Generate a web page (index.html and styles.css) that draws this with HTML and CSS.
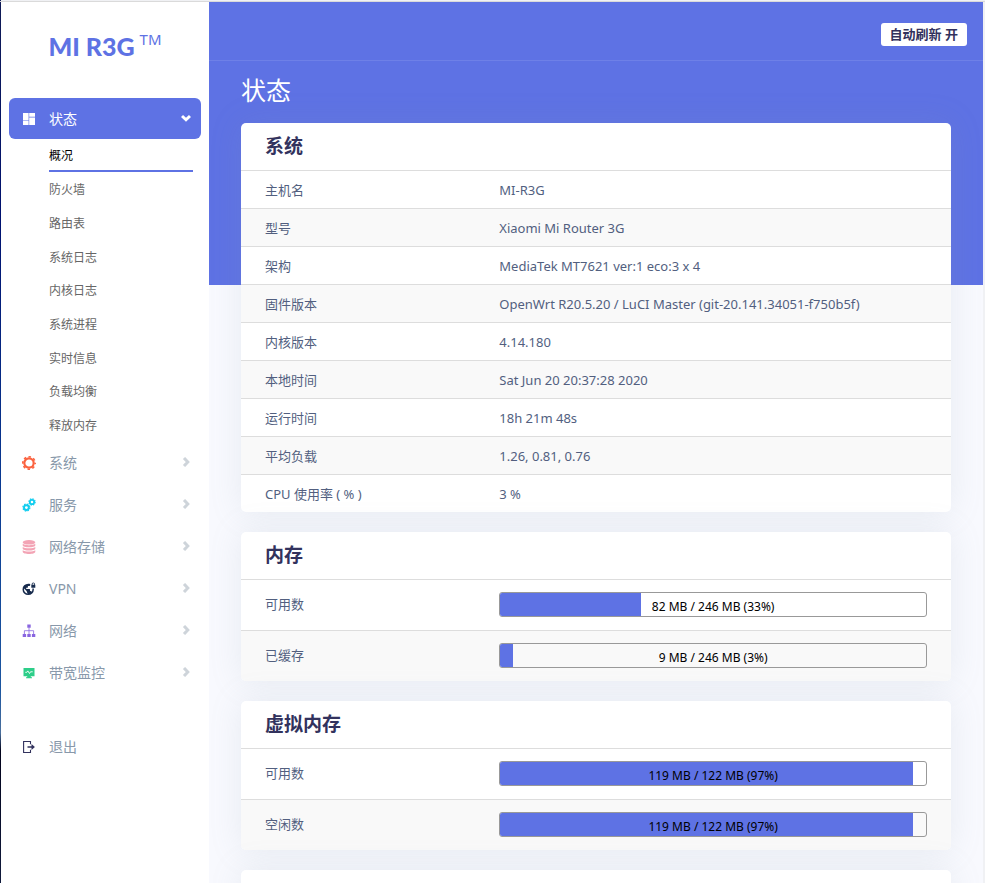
FILE: index.html
```html
<!DOCTYPE html>
<html lang="zh-CN">
<head>
<meta charset="utf-8">
<title>MI-R3G - 概况 - LuCI</title>
<meta name="viewport" content="width=device-width, initial-scale=1">
<link rel="stylesheet" href="styles.css">
</head>
<body>
<div class="app">
  <aside class="sidebar">
    <a class="brand" href="#">MI R3G<span class="brand-mark">TM</span></a>
    <nav class="menu">
      <a class="menu-item active" href="#">
        <svg class="icon" viewBox="0 0 14 14" fill="currentColor"><path d="M1 1h5.600v7H1zM7.200 1H13v3.800H7.200zM7.200 5.400H13V13H7.200zM1 8.600h5.600V13H1z"/></svg>
        <span>状态</span>
        <svg class="chevron" viewBox="0 0 10 10"><path d="M1 3l4 3.800L9 3"/></svg>
      </a>
      <ul class="submenu">
        <li><a class="current" href="#">概况</a></li>
        <li><a href="#">防火墙</a></li>
        <li><a href="#">路由表</a></li>
        <li><a href="#">系统日志</a></li>
        <li><a href="#">内核日志</a></li>
        <li><a href="#">系统进程</a></li>
        <li><a href="#">实时信息</a></li>
        <li><a href="#">负载均衡</a></li>
        <li><a href="#">释放内存</a></li>
      </ul>
      <a class="menu-item" href="#">
        <svg class="icon orange" viewBox="0 0 14 14"><circle cx="7" cy="7" r="4.700" fill="none" stroke="currentColor" stroke-width="2.200"/><circle cx="7" cy="7" r="6.200" fill="none" stroke="currentColor" stroke-width="1.600" stroke-dasharray="2.500 2.369" stroke-dashoffset="1.250"/></svg>
        <span>系统</span>
        <svg class="chevron" viewBox="0 0 10 10"><path d="M3 1l3.800 4L3 9"/></svg>
      </a>
      <a class="menu-item" href="#">
        <svg class="icon cyan" viewBox="0 0 14 14" fill="none" stroke="currentColor"><circle cx="4.400" cy="9.600" r="2.400" stroke-width="1.900"/><circle cx="4.400" cy="9.600" r="3.500" stroke-width="1.200" stroke-dasharray="1.500 1.249"/><circle cx="10" cy="4" r="2.200" stroke-width="1.800"/><circle cx="10" cy="4" r="3.200" stroke-width="1.100" stroke-dasharray="1.400 1.113"/></svg>
        <span>服务</span>
        <svg class="chevron" viewBox="0 0 10 10"><path d="M3 1l3.800 4L3 9"/></svg>
      </a>
      <a class="menu-item" href="#">
        <svg class="icon pink" viewBox="0 0 14 14" fill="currentColor"><ellipse cx="7" cy="2.300" rx="6.300" ry="2.300"/><path d="M.7 3.800c1.600 1.800 11 1.800 12.600 0v1.400c0 2.800-12.600 2.800-12.600 0zM.7 7c1.600 1.800 11 1.800 12.600 0v1.400c0 2.800-12.600 2.800-12.600 0zM.7 10.200c1.600 1.800 11 1.800 12.600 0v1.500c0 3-12.600 3-12.600 0z"/></svg>
        <span>网络存储</span>
        <svg class="chevron" viewBox="0 0 10 10"><path d="M3 1l3.800 4L3 9"/></svg>
      </a>
      <a class="menu-item" href="#">
        <svg class="icon navy" viewBox="0 0 14 14" fill="currentColor"><path fill-rule="evenodd" d="M6.200 1.700A5.700 5.700 0 1 0 11.900 7.400c0-.4 0-.7-.1-1H10.300c.1.400.1.700.1 1 0 .9-.3 1.700-.8 2.400-.2-.5-.6-.8-1.100-.8H8V7.500c0-.4-.2-.6-.5-.6H4.200V5.700h1.200c.3 0 .5-.2.500-.5V4.100h1.100c.7 0 1.200-.5 1.200-1.100V2.100c-.6-.3-1.300-.4-2-.4zM5.600 11.600A4.200 4.200 0 0 1 2.100 6.500l2.700 2.700v.6c0 .6.300 1 .8 1.100z"/><path fill-rule="evenodd" d="M9.300 2.700h.4V2a1.600 1.600 0 0 1 3.200 0v.7h.4v3H9.300zm1.200 0h1.600V2a.8.8 0 0 0-1.600 0z"/></svg>
        <span>VPN</span>
        <svg class="chevron" viewBox="0 0 10 10"><path d="M3 1l3.800 4L3 9"/></svg>
      </a>
      <a class="menu-item" href="#">
        <svg class="icon purple" viewBox="0 0 14 14" fill="currentColor"><path d="M5.300.5h3.400v3.200H5.300zM.7 10h3.400v3H.7zM5.300 10h3.400v3H5.300zM9.900 10h3.400v3H9.900z"/><path d="M7 3.500v6.500M2.400 10V6.700h9.200V10" fill="none" stroke="currentColor" stroke-width=".8"/></svg>
        <span>网络</span>
        <svg class="chevron" viewBox="0 0 10 10"><path d="M3 1l3.800 4L3 9"/></svg>
      </a>
      <a class="menu-item" href="#">
        <svg class="icon green" viewBox="0 0 14 14"><path fill="currentColor" d="M1.500 2h11v8.300H8.800v1H10v.9H4v-.9h1.200v-1H1.500z"/><path d="M3.300 6.300h1.500l1-1.400 1.700 2.600 1-1.700h2.200" fill="none" stroke="#fff" stroke-width=".9"/></svg>
        <span>带宽监控</span>
        <svg class="chevron" viewBox="0 0 10 10"><path d="M3 1l3.800 4L3 9"/></svg>
      </a>
      <a class="menu-item logout" href="#">
        <svg class="icon indigo" viewBox="0 0 14 14"><path d="M8.500 4.200V1.500H1.600v11h6.900V9.800" fill="none" stroke="currentColor" stroke-width="1.100"/><path d="M5.500 6.200h4V4l3.400 3-3.400 3V7.800h-4z" fill="currentColor"/></svg>
        <span>退出</span>
      </a>
    </nav>
  </aside>
  <main class="main">
    <header class="topbar">
      <button class="refresh" type="button">自动刷新 开</button>
    </header>
    <div class="content">
      <h1>状态</h1>
      <section class="card">
        <h2>系统</h2>
        <table>
          <tr><th scope="row">主机名</th><td>MI-R3G</td></tr>
          <tr><th scope="row">型号</th><td>Xiaomi Mi Router 3G</td></tr>
          <tr><th scope="row">架构</th><td>MediaTek MT7621 ver:1 eco:3 x 4</td></tr>
          <tr><th scope="row">固件版本</th><td>OpenWrt R20.5.20 / LuCI Master (git-20.141.34051-f750b5f)</td></tr>
          <tr><th scope="row">内核版本</th><td>4.14.180</td></tr>
          <tr><th scope="row">本地时间</th><td>Sat Jun 20 20:37:28 2020</td></tr>
          <tr><th scope="row">运行时间</th><td>18h 21m 48s</td></tr>
          <tr><th scope="row">平均负载</th><td>1.26, 0.81, 0.76</td></tr>
          <tr><th scope="row">CPU 使用率 ( % )</th><td>3 %</td></tr>
        </table>
      </section>
      <section class="card">
        <h2>内存</h2>
        <table class="meters">
          <tr><th scope="row">可用数</th><td><div class="bar"><div class="fill" style="width:33%"></div><span>82 MB / 246 MB (33%)</span></div></td></tr>
          <tr><th scope="row">已缓存</th><td><div class="bar"><div class="fill" style="width:3%"></div><span>9 MB / 246 MB (3%)</span></div></td></tr>
        </table>
      </section>
      <section class="card">
        <h2>虚拟内存</h2>
        <table class="meters">
          <tr><th scope="row">可用数</th><td><div class="bar"><div class="fill" style="width:97%"></div><span>119 MB / 122 MB (97%)</span></div></td></tr>
          <tr><th scope="row">空闲数</th><td><div class="bar"><div class="fill" style="width:97%"></div><span>119 MB / 122 MB (97%)</span></div></td></tr>
        </table>
      </section>
      <section class="card"><h2></h2></section>
    </div>
  </main>
</div>
</body>
</html>
```

FILE: styles.css
```css
:root {
  --primary: #5e72e4;
  --line: #ddd;
}

* {
  box-sizing: border-box;
}

body {
  margin: 0;
  font-family: "Noto Sans", "Noto Sans CJK SC", sans-serif;
  font-size: 13px;
  color: #525f7f;
  background: #f8f9fe;
}

a {
  color: inherit;
  text-decoration: none;
}

.app {
  display: flex;
  height: 100vh;
  overflow: hidden;
  padding: 2px 2px 0 1px;
  background:
    linear-gradient(#dadada, #dadada) 0 1px / 100% 1px no-repeat,
    linear-gradient(#0f1a55, #001270 25%, #0a3a92 55%, #1c56a0 78%, #4a6f9c 83%, #02031c 85%, #101a3c) 0 0 / 1px 100% no-repeat,
    #f0f1f4;
}

.sidebar {
  flex: 0 0 208px;
  background: #fff;
}

.brand {
  display: flex;
  justify-content: center;
  gap: 5px;
  height: 96px;
  padding-top: 24px;
  font: 900 25px/40px Lato, sans-serif;
  color: var(--primary);
}

.brand-mark {
  font: 15px/27px "Noto Sans", sans-serif;
}

.menu {
  padding: 0 8px;
}

.menu-item {
  display: flex;
  align-items: center;
  height: 42px;
  padding: 0 10px 0 13px;
  font-size: 14px;
  color: #8898aa;
}

.menu-item span {
  padding-bottom: 2px;
}

.menu-item.active {
  height: 41px;
  color: #fff;
  background: var(--primary);
  border-radius: 6px;
}

.icon {
  width: 14px;
  height: 14px;
  margin-right: 13px;
}

.chevron {
  width: 10px;
  height: 10px;
  margin-left: auto;
  margin-bottom: 2px;
  fill: none;
  stroke: #ced4da;
  stroke-width: 3;
}

.active .chevron {
  stroke: #fff;
}

.orange { color: #fb6340; }
.cyan { color: #11cdef; }
.pink { color: #f3a4b5; }
.navy { color: #172b4d; }
.purple { color: #8965e0; }
.green { color: #2dce89; }
.indigo { color: #32325d; }

.logout {
  margin-top: 32px;
}

.submenu {
  display: grid;
  grid-auto-rows: 1fr;
  min-height: 303px;
  margin: 0;
  padding: 0 8px 0 40px;
  list-style: none;
  font-size: 12px;
  color: #666;
}

.submenu li {
  display: grid;
}

.submenu a {
  display: flex;
  align-items: center;
}

.submenu .current {
  margin-bottom: 1px;
  padding-top: 2px;
  color: #000;
  border-bottom: 2px solid var(--primary);
}

.main {
  flex: 1;
  min-width: 0;
  background: linear-gradient(var(--primary), var(--primary)) 0 0 / 100% 283px no-repeat #f8f9fe;
}

.topbar {
  display: flex;
  align-items: center;
  justify-content: flex-end;
  height: 59px;
  padding: 6px 16px 0;
  border-bottom: 1px solid #6e80e7;
}

.refresh {
  height: 23px;
  padding: 0 9px;
  border: 0;
  border-radius: 3px;
  background: #fff;
  color: #32325d;
  font: bold 13px/23px "Noto Sans", "Noto Sans CJK SC", sans-serif;
}

.content {
  padding: 0 32px;
}

h1 {
  margin: 0;
  padding: 11px 0 15px;
  font-size: 25px;
  line-height: 36px;
  font-weight: 400;
  color: #fff;
}

.card {
  margin-bottom: 20px;
  overflow: hidden;
  background: #fff;
  border-radius: 5px;
  box-shadow: 0 0 32px rgba(136, 152, 170, .15);
}

h2 {
  margin: 0;
  padding: 0 24px;
  min-height: 47px;
  font-size: 19px;
  line-height: 47px;
  font-weight: 700;
  color: #32325d;
}

table {
  width: 100%;
  table-layout: fixed;
  border-spacing: 0;
}

th,
td {
  height: 38px;
  padding: 0 24px;
  border-top: 1px solid var(--line);
  line-height: 20px;
  text-align: left;
  font-weight: 400;
}

th {
  width: 33%;
}

tr:nth-child(even) {
  background: #f9f9f9;
}

.meters th,
.meters td {
  height: 51px;
  padding-bottom: 2px;
}

.bar {
  display: grid;
  height: 25px;
  border: 1px solid #999;
  border-radius: 3px;
  overflow: hidden;
}

.fill,
.bar span {
  grid-area: 1 / 1;
}

.fill {
  background: var(--primary);
}

.bar span {
  padding-top: 4px;
  font-size: 12px;
  text-align: center;
  color: #000;
}
```
